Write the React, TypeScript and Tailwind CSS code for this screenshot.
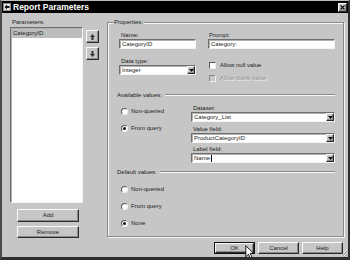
import React from "react";

const raised =
  "bg-[#c6c6c6] border border-t-[#fafafa] border-l-[#fafafa] border-r-[#2a2a2a] border-b-[#2a2a2a] shadow-[inset_-1px_-1px_0_#8a8a8a]";
const sunken =
  "bg-white border border-t-[#6e6e6e] border-l-[#6e6e6e] border-r-[#f4f4f4] border-b-[#f4f4f4] shadow-[inset_1px_1px_0_#b0b0b0]";

function Radio({ checked }: { checked?: boolean }) {
  return (
    <span className="w-[7px] h-[7px] rounded-full bg-white border border-t-[#5a5a5a] border-l-[#5a5a5a] border-r-[#f0f0f0] border-b-[#f0f0f0] flex items-center justify-center shrink-0">
      {checked && <span className="w-[3px] h-[3px] rounded-full bg-[#111]" />}
    </span>
  );
}

function RadioRow({ label, checked, className }: { label: string; checked?: boolean; className?: string }) {
  return (
    <div className={`h-[8px] flex items-center ${className ?? ""}`}>
      <Radio checked={checked} />
      <span className="ml-[3px] leading-[8px]">{label}</span>
    </div>
  );
}

function DropArrow() {
  return (
    <span className={`w-[8px] h-[8px] ${raised} flex items-center justify-center shrink-0`}>
      <svg width="5" height="3" viewBox="0 0 5 3">
        <path d="M0 0 H5 L2.5 3 Z" fill="#111" />
      </svg>
    </span>
  );
}

function Select({ value, cursor, className }: { value: string; cursor?: boolean; className?: string }) {
  return (
    <div className={`h-[10px] ${sunken} flex items-center ${className ?? ""}`}>
      <span className="flex-1 pl-[2px] leading-[8px] whitespace-nowrap flex items-center">
        {value}
        {cursor && <span className="inline-block w-[1px] h-[7px] bg-black ml-[0.5px]" />}
      </span>
      <DropArrow />
    </div>
  );
}

function Input({ value, className }: { value: string; className?: string }) {
  return (
    <div className={`h-[10px] ${sunken} flex items-center ${className ?? ""}`}>
      <span className="pl-[2px] leading-[8px] whitespace-nowrap">{value}</span>
    </div>
  );
}

function Separator({ label, className }: { label: string; className?: string }) {
  return (
    <div className={`h-[8px] flex items-center ml-[9px] mr-[8px] ${className ?? ""}`}>
      <span className="leading-[8px] whitespace-nowrap">{label}</span>
      <span className="flex-1 ml-[3px] h-[2px] border-t border-t-[#8a8a8a] border-b border-b-[#f6f6f6]" />
    </div>
  );
}

function Btn({ children, className }: { children: React.ReactNode; className?: string }) {
  return (
    <div className={`${raised} flex items-center justify-center leading-[8px] ${className ?? ""}`}>
      {children}
    </div>
  );
}

function ArrowBtn({ up }: { up?: boolean }) {
  return (
    <div className={`w-[13px] h-[13px] ${raised} flex items-center justify-center`}>
      <svg width="5" height="6" viewBox="0 0 5 6" style={{ transform: up ? "none" : "rotate(180deg)" }}>
        <path d="M2.5 0 L5 3 H3.5 V6 H1.5 V3 H0 Z" fill="#333" />
      </svg>
    </div>
  );
}

export default function App() {
  return (
    <div className="w-[350px] h-[260px] bg-[#c6c6c6] flex flex-col border-l-2 border-r-2 border-t border-b-[3px] border-l-[#4a4a4a] border-r-[#2e2e2e] border-b-[#2e2e2e] border-t-[#bdbdbd] text-[#1c1c1c] font-['Liberation_Sans',Arial,sans-serif] text-[6px] relative overflow-hidden">
      {/* Title bar */}
      <div className="h-[12px] bg-black flex items-center pl-[1px] pr-[1px] shrink-0">
        <svg width="8" height="8" viewBox="0 0 8 8" className="shrink-0">
          <rect x="0" y="0" width="8" height="8" fill="#e8e8e8" />
          <rect x="0.5" y="0.5" width="7" height="7" fill="none" stroke="#888" strokeWidth="1" />
          <path d="M1.5 4 L4 1.5 V3 H6.5 V5 H4 V6.5 Z" fill="#111" />
        </svg>
        <span className="ml-[2px] text-white font-bold text-[8.5px] leading-[10px] whitespace-nowrap">
          Report Parameters
        </span>
        <div className={`ml-auto w-[9px] h-[9px] ${raised} flex items-center justify-center`}>
          <svg width="5" height="5" viewBox="0 0 5 5">
            <path d="M0.5 0.5 L4.5 4.5 M4.5 0.5 L0.5 4.5" stroke="#111" strokeWidth="1.2" />
          </svg>
        </div>
      </div>

      {/* Body */}
      <div className="flex h-[225px] shrink-0">
        {/* Left column */}
        <div className="w-[105px] flex flex-col pl-[8px] shrink-0">
          <div className="h-[8px] mt-[5px] leading-[8px] pl-[2px]">Parameters:</div>
          <div className="flex mt-[1px]">
            <div className={`w-[73px] h-[176px] ${sunken} pt-[1px] pl-[1px]`}>
              <div className="h-[9px] bg-[#bdbdbd] leading-[9px] pl-[1px] w-full">CategoryID</div>
            </div>
            <div className="flex flex-col ml-[3px] mt-[3px] gap-[4px]">
              <ArrowBtn up />
              <ArrowBtn />
            </div>
          </div>
          <Btn className="ml-[7px] mt-[6px] w-[62px] h-[13px]">Add</Btn>
          <Btn className="ml-[7px] mt-[4px] w-[62px] h-[13px]">Remove</Btn>
        </div>

        {/* Properties group */}
        <div className="mt-[9px] w-[237px] h-[215px] relative border border-[#8a8a8a] shadow-[1px_1px_0_#f6f6f6,inset_1px_1px_0_#f6f6f6] flex flex-col shrink-0">
          <span className="absolute -top-[5px] left-[5px] px-[1px] bg-[#c6c6c6] leading-[8px]">Properties:</span>

          {/* Name / Prompt */}
          <div className="flex mt-[8px]">
            <div className="ml-[11px] w-[77px] flex flex-col">
              <div className="h-[8px] leading-[8px] pl-[2px]">Name:</div>
              <Input value="CategoryID" />
            </div>
            <div className="ml-[12px] w-[127px] flex flex-col">
              <div className="h-[8px] leading-[8px] pl-[1px]">Prompt:</div>
              <Input value="Category:" />
            </div>
          </div>

          {/* Data type / checkboxes */}
          <div className="flex mt-[8px]">
            <div className="ml-[11px] w-[77px] flex flex-col">
              <div className="h-[8px] leading-[8px] pl-[2px]">Data type:</div>
              <Select value="Integer" />
            </div>
            <div className="ml-[13px] flex flex-col mt-[4px]">
              <div className="h-[8px] flex items-center">
                <span className="w-[7px] h-[7px] bg-white border border-t-[#5a5a5a] border-l-[#5a5a5a] border-r-[#f0f0f0] border-b-[#f0f0f0]" />
                <span className="ml-[4px] leading-[8px]">Allow null value</span>
              </div>
              <div className="h-[8px] flex items-center mt-[5px]">
                <span className="w-[7px] h-[7px] bg-[#c6c6c6] border border-t-[#8a8a8a] border-l-[#8a8a8a] border-r-[#f0f0f0] border-b-[#f0f0f0]" />
                <span className="ml-[4px] leading-[8px] text-[#8e8e8e] [text-shadow:1px_1px_0_#f4f4f4]">
                  Allow blank value
                </span>
              </div>
            </div>
          </div>

          <Separator label="Available values:" className="mt-[9px]" />

          <div className="flex mt-[5px]">
            <div className="ml-[13px] w-[70px] flex flex-col">
              <RadioRow label="Non-queried" className="mt-[3px]" />
              <RadioRow label="From query" checked className="mt-[9px]" />
            </div>
            <div className="w-[144px] flex flex-col">
              <div className="h-[8px] leading-[8px] pl-[2px]">Dataset:</div>
              <Select value="Category_List" />
              <div className="h-[8px] leading-[8px] pl-[2px] mt-[3px]">Value field:</div>
              <Select value="ProductCategoryID" />
              <div className="h-[8px] leading-[8px] pl-[2px] mt-[2px]">Label field:</div>
              <Select value="Name" cursor />
            </div>
          </div>

          <Separator label="Default values:" className="mt-[5px]" />

          <div className="ml-[13px] flex flex-col">
            <RadioRow label="Non-queried" className="mt-[9px]" />
            <RadioRow label="From query" className="mt-[9px]" />
            <RadioRow label="None" checked className="mt-[9px]" />
          </div>
        </div>
      </div>

      {/* Bottom buttons */}
      <div className="flex justify-end gap-[3px] pr-[5px] mt-[4px] h-[12px]">
        <div className="w-[41px] h-[12px] border border-[#111]">
          <Btn className="w-full h-full">OK</Btn>
        </div>
        <Btn className="w-[41px] h-[12px]">Cancel</Btn>
        <Btn className="w-[41px] h-[12px]">Help</Btn>
      </div>

      {/* Mouse cursor overlay */}
      <svg className="absolute left-[243px] top-[244px]" width="9" height="14" viewBox="0 0 12 19">
        <path
          d="M1 1 L1 16 L4.5 12.5 L7 18 L9.5 17 L7 11.5 L11.5 11.5 Z"
          fill="#fff"
          stroke="#000"
          strokeWidth="1.2"
          strokeLinejoin="round"
        />
      </svg>

      {/* Resize grip */}
      <svg className="absolute right-[0px] bottom-[0px]" width="8" height="8" viewBox="0 0 8 8">
        <path d="M7 1 L1 7 M7 4 L4 7" stroke="#fff" strokeWidth="0.8" />
        <path d="M7.6 1.6 L1.6 7.6 M7.6 4.6 L4.6 7.6" stroke="#777" strokeWidth="0.8" />
      </svg>
    </div>
  );
}
